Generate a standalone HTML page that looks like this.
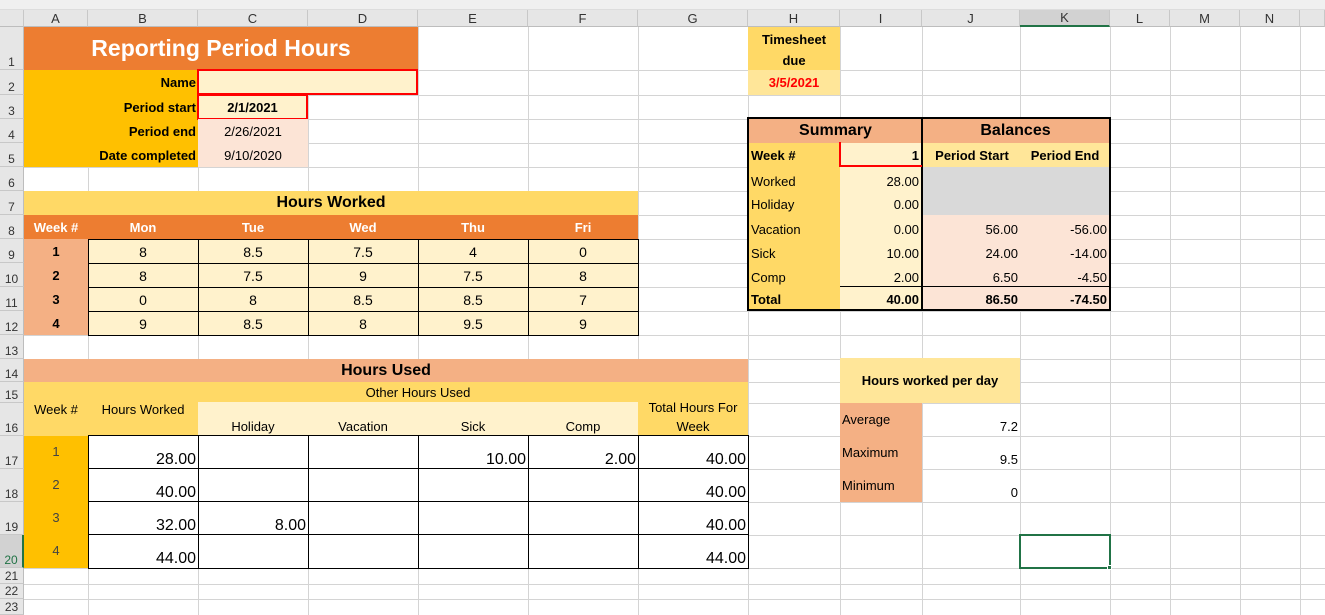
<!DOCTYPE html>
<html><head><meta charset="utf-8"><style>
body{margin:0;width:1325px;height:615px;overflow:hidden;background:#fff;font-family:"Liberation Sans",Arial,sans-serif;position:relative}
div{position:absolute;box-sizing:border-box}
.v{width:1px;top:10px;height:605px;background:#d4d4d4}
.h{height:1px;left:0;width:1325px;background:#d4d4d4}
.c{display:flex;align-items:center;font-size:13px;color:#000;white-space:nowrap;padding:0 2px}
.ch{top:10px;height:17px;background:#e6e6e6;font-size:13px;color:#333;display:flex;align-items:center;justify-content:center;border-right:1px solid #c8c8c8;border-bottom:1px solid #bdbdbd}
.rh{left:0;width:24px;background:#e6e6e6;font-size:12px;color:#333;display:flex;align-items:flex-end;justify-content:center;border-right:1px solid #bdbdbd;border-bottom:1px solid #c8c8c8}
.b{font-weight:bold}.r{justify-content:flex-end}.m{justify-content:center}
</style></head><body>
<div style="left:0;top:0;width:1325px;height:10px;background:#f0f0f0;border-bottom:1px solid #ddd"></div>
<!-- grid lines -->
<div class="v" style="left:88px"></div><div class="v" style="left:198px"></div><div class="v" style="left:308px"></div><div class="v" style="left:418px"></div><div class="v" style="left:528px"></div><div class="v" style="left:638px"></div><div class="v" style="left:748px"></div><div class="v" style="left:840px"></div><div class="v" style="left:922px"></div><div class="v" style="left:1020px"></div><div class="v" style="left:1110px"></div><div class="v" style="left:1170px"></div><div class="v" style="left:1240px"></div><div class="v" style="left:1300px"></div>
<div class="h" style="top:70px"></div><div class="h" style="top:95px"></div><div class="h" style="top:119px"></div><div class="h" style="top:143px"></div><div class="h" style="top:167px"></div><div class="h" style="top:191px"></div><div class="h" style="top:215px"></div><div class="h" style="top:239px"></div><div class="h" style="top:263px"></div><div class="h" style="top:287px"></div><div class="h" style="top:311px"></div><div class="h" style="top:335px"></div><div class="h" style="top:359px"></div><div class="h" style="top:382px"></div><div class="h" style="top:403px"></div><div class="h" style="top:436px"></div><div class="h" style="top:469px"></div><div class="h" style="top:502px"></div><div class="h" style="top:535px"></div><div class="h" style="top:568px"></div><div class="h" style="top:584px"></div><div class="h" style="top:599px"></div>
<!-- column headers -->
<div class="ch" style="left:0;width:24px"></div>
<div class="ch" style="left:24px;width:64px">A</div><div class="ch" style="left:88px;width:110px">B</div><div class="ch" style="left:198px;width:110px">C</div><div class="ch" style="left:308px;width:110px">D</div><div class="ch" style="left:418px;width:110px">E</div><div class="ch" style="left:528px;width:110px">F</div><div class="ch" style="left:638px;width:110px">G</div><div class="ch" style="left:748px;width:92px">H</div><div class="ch" style="left:840px;width:82px">I</div><div class="ch" style="left:922px;width:98px">J</div><div class="ch" style="left:1020px;width:90px;background:#d2d2d2;border-bottom:2px solid #217346">K</div><div class="ch" style="left:1110px;width:60px">L</div><div class="ch" style="left:1170px;width:70px">M</div><div class="ch" style="left:1240px;width:60px">N</div><div class="ch" style="left:1300px;width:25px"></div>
<!-- row headers -->
<div class="rh" style="top:27px;height:43px">1</div><div class="rh" style="top:70px;height:25px">2</div><div class="rh" style="top:95px;height:24px">3</div><div class="rh" style="top:119px;height:24px">4</div><div class="rh" style="top:143px;height:24px">5</div><div class="rh" style="top:167px;height:24px">6</div><div class="rh" style="top:191px;height:24px">7</div><div class="rh" style="top:215px;height:24px">8</div><div class="rh" style="top:239px;height:24px">9</div><div class="rh" style="top:263px;height:24px">10</div><div class="rh" style="top:287px;height:24px">11</div><div class="rh" style="top:311px;height:24px">12</div><div class="rh" style="top:335px;height:24px">13</div><div class="rh" style="top:359px;height:23px">14</div><div class="rh" style="top:382px;height:21px">15</div><div class="rh" style="top:403px;height:33px">16</div><div class="rh" style="top:436px;height:33px">17</div><div class="rh" style="top:469px;height:33px">18</div><div class="rh" style="top:502px;height:33px">19</div><div class="rh" style="top:535px;height:33px;background:#d2d2d2;color:#217346;border-right:2px solid #217346">20</div><div class="rh" style="top:568px;height:16px">21</div><div class="rh" style="top:584px;height:15px">22</div><div class="rh" style="top:599px;height:16px">23</div>

<!-- top block -->
<div class="c m b" style="left:24px;top:27px;width:394px;height:43px;background:#ed7d31;color:#fff;font-size:23px">Reporting Period Hours</div>
<div style="left:24px;top:70px;width:174px;height:97px;background:#ffc000"></div>
<div class="c r b" style="left:24px;top:70px;width:174px;height:25px">Name</div>
<div class="c r b" style="left:24px;top:95px;width:174px;height:24px">Period start</div>
<div class="c r b" style="left:24px;top:119px;width:174px;height:24px">Period end</div>
<div class="c r b" style="left:24px;top:143px;width:174px;height:24px">Date completed</div>
<div style="left:197px;top:69px;width:221px;height:26px;background:#fff2cc;border:2px solid #f00"></div>
<div class="c m b" style="left:197px;top:94px;width:111px;height:26px;background:#fff2cc;border:2px solid #f00">2/1/2021</div>
<div class="c m" style="left:198px;top:119px;width:110px;height:24px;background:#fce4d6">2/26/2021</div>
<div class="c m" style="left:198px;top:143px;width:110px;height:24px;background:#fce4d6">9/10/2020</div>

<!-- Hours worked -->
<div class="c m b" style="left:24px;top:191px;width:614px;height:24px;background:#ffd966;font-size:16px">Hours Worked</div>
<div style="left:24px;top:215px;width:614px;height:24px;background:#ed7d31"></div>
<div class="c m b" style="left:24px;top:215px;width:64px;height:24px;color:#fff">Week #</div>
<div class="c m b" style="left:88px;top:215px;width:110px;height:24px;color:#fff">Mon</div>
<div class="c m b" style="left:198px;top:215px;width:110px;height:24px;color:#fff">Tue</div>
<div class="c m b" style="left:308px;top:215px;width:110px;height:24px;color:#fff">Wed</div>
<div class="c m b" style="left:418px;top:215px;width:110px;height:24px;color:#fff">Thu</div>
<div class="c m b" style="left:528px;top:215px;width:110px;height:24px;color:#fff">Fri</div>
<div style="left:24px;top:239px;width:64px;height:96px;background:#f4b084"></div>
<div class="c m b" style="left:24px;top:239px;width:64px;height:24px">1</div><div class="c m b" style="left:24px;top:263px;width:64px;height:24px">2</div><div class="c m b" style="left:24px;top:287px;width:64px;height:24px">3</div><div class="c m b" style="left:24px;top:311px;width:64px;height:24px">4</div>
<div style="left:88px;top:239px;width:551px;height:97px;background:#fff2cc;border:1px solid #000"></div>
<div style="left:88px;top:263px;width:550px;height:1px;background:#000"></div><div style="left:88px;top:287px;width:550px;height:1px;background:#000"></div><div style="left:88px;top:311px;width:550px;height:1px;background:#000"></div>
<div style="left:198px;top:239px;width:1px;height:96px;background:#000"></div><div style="left:308px;top:239px;width:1px;height:96px;background:#000"></div><div style="left:418px;top:239px;width:1px;height:96px;background:#000"></div><div style="left:528px;top:239px;width:1px;height:96px;background:#000"></div>
<div class="c m" style="left:88px;top:240px;width:110px;height:24px;font-size:14px">8</div><div class="c m" style="left:198px;top:240px;width:110px;height:24px;font-size:14px">8.5</div><div class="c m" style="left:308px;top:240px;width:110px;height:24px;font-size:14px">7.5</div><div class="c m" style="left:418px;top:240px;width:110px;height:24px;font-size:14px">4</div><div class="c m" style="left:528px;top:240px;width:110px;height:24px;font-size:14px">0</div>
<div class="c m" style="left:88px;top:264px;width:110px;height:24px;font-size:14px">8</div><div class="c m" style="left:198px;top:264px;width:110px;height:24px;font-size:14px">7.5</div><div class="c m" style="left:308px;top:264px;width:110px;height:24px;font-size:14px">9</div><div class="c m" style="left:418px;top:264px;width:110px;height:24px;font-size:14px">7.5</div><div class="c m" style="left:528px;top:264px;width:110px;height:24px;font-size:14px">8</div>
<div class="c m" style="left:88px;top:288px;width:110px;height:24px;font-size:14px">0</div><div class="c m" style="left:198px;top:288px;width:110px;height:24px;font-size:14px">8</div><div class="c m" style="left:308px;top:288px;width:110px;height:24px;font-size:14px">8.5</div><div class="c m" style="left:418px;top:288px;width:110px;height:24px;font-size:14px">8.5</div><div class="c m" style="left:528px;top:288px;width:110px;height:24px;font-size:14px">7</div>
<div class="c m" style="left:88px;top:312px;width:110px;height:24px;font-size:14px">9</div><div class="c m" style="left:198px;top:312px;width:110px;height:24px;font-size:14px">8.5</div><div class="c m" style="left:308px;top:312px;width:110px;height:24px;font-size:14px">8</div><div class="c m" style="left:418px;top:312px;width:110px;height:24px;font-size:14px">9.5</div><div class="c m" style="left:528px;top:312px;width:110px;height:24px;font-size:14px">9</div>

<!-- Hours used -->
<div class="c m b" style="left:24px;top:359px;width:724px;height:23px;background:#f4b084;font-size:16px">Hours Used</div>
<div style="left:24px;top:382px;width:724px;height:54px;background:#ffd966"></div>
<div style="left:198px;top:402px;width:440px;height:34px;background:#fff2cc"></div>
<div class="c m" style="left:198px;top:382px;width:440px;height:21px">Other Hours Used</div>
<div class="c m" style="left:24px;top:398px;width:64px;height:22px">Week #</div>
<div class="c m" style="left:88px;top:398px;width:110px;height:22px">Hours Worked</div>
<div class="c m" style="left:198px;top:416px;width:110px;height:20px">Holiday</div>
<div class="c m" style="left:308px;top:416px;width:110px;height:20px">Vacation</div>
<div class="c m" style="left:418px;top:416px;width:110px;height:20px">Sick</div>
<div class="c m" style="left:528px;top:416px;width:110px;height:20px">Comp</div>
<div class="c m" style="left:638px;top:397px;width:110px;height:20px">Total Hours For</div>
<div class="c m" style="left:638px;top:416px;width:110px;height:20px">Week</div>
<div style="left:24px;top:436px;width:64px;height:132px;background:#ffc000"></div>
<div class="c m" style="left:24px;top:443px;width:64px;height:16px;color:#444">1</div><div class="c m" style="left:24px;top:476px;width:64px;height:16px;color:#444">2</div><div class="c m" style="left:24px;top:509px;width:64px;height:16px;color:#444">3</div><div class="c m" style="left:24px;top:542px;width:64px;height:16px;color:#444">4</div>
<div style="left:88px;top:435px;width:661px;height:134px;border:1px solid #000;background:#fff"></div>
<div style="left:88px;top:468px;width:660px;height:1px;background:#000"></div><div style="left:88px;top:501px;width:660px;height:1px;background:#000"></div><div style="left:88px;top:534px;width:660px;height:1px;background:#000"></div>
<div style="left:198px;top:436px;width:1px;height:132px;background:#000"></div><div style="left:308px;top:436px;width:1px;height:132px;background:#000"></div><div style="left:418px;top:436px;width:1px;height:132px;background:#000"></div><div style="left:528px;top:436px;width:1px;height:132px;background:#000"></div><div style="left:638px;top:436px;width:1px;height:132px;background:#000"></div>
<div class="c r" style="left:88px;top:450px;width:110px;height:20px;font-size:16px">28.00</div><div class="c r" style="left:418px;top:450px;width:110px;height:20px;font-size:16px">10.00</div><div class="c r" style="left:528px;top:450px;width:110px;height:20px;font-size:16px">2.00</div><div class="c r" style="left:638px;top:450px;width:110px;height:20px;font-size:16px">40.00</div>
<div class="c r" style="left:88px;top:483px;width:110px;height:20px;font-size:16px">40.00</div><div class="c r" style="left:638px;top:483px;width:110px;height:20px;font-size:16px">40.00</div>
<div class="c r" style="left:88px;top:516px;width:110px;height:20px;font-size:16px">32.00</div><div class="c r" style="left:198px;top:516px;width:110px;height:20px;font-size:16px">8.00</div><div class="c r" style="left:638px;top:516px;width:110px;height:20px;font-size:16px">40.00</div>
<div class="c r" style="left:88px;top:549px;width:110px;height:20px;font-size:16px">44.00</div><div class="c r" style="left:638px;top:549px;width:110px;height:20px;font-size:16px">44.00</div>

<!-- Timesheet due -->
<div style="left:748px;top:27px;width:92px;height:43px;background:#ffd966"></div>
<div class="c m b" style="left:748px;top:29px;width:92px;height:20px">Timesheet</div>
<div class="c m b" style="left:748px;top:50px;width:92px;height:20px">due</div>
<div class="c m b" style="left:748px;top:70px;width:92px;height:25px;background:#ffe699;color:#f00">3/5/2021</div>

<!-- Summary -->
<div style="left:747px;top:117px;width:364px;height:194px;border:2px solid #000;background:#fff"></div>
<div class="c m b" style="left:749px;top:119px;width:173px;height:24px;background:#f4b084;font-size:16px">Summary</div>
<div class="c m b" style="left:922px;top:119px;width:187px;height:24px;background:#f4b084;font-size:16px">Balances</div>
<div style="left:921px;top:119px;width:2px;height:190px;background:#000"></div>
<div style="left:749px;top:143px;width:91px;height:166px;background:#ffd966"></div>
<div style="left:840px;top:143px;width:81px;height:166px;background:#fff2cc"></div>
<div style="left:923px;top:143px;width:186px;height:24px;background:#ffe699"></div>
<div style="left:923px;top:167px;width:186px;height:48px;background:#d9d9d9"></div>
<div style="left:923px;top:215px;width:186px;height:94px;background:#fce4d6"></div>
<div style="left:839px;top:142px;width:83px;height:25px;border:2px solid #f00;border-top:0;border-right:0"></div>
<div style="left:839px;top:165px;width:83px;height:2px;background:#f00"></div>
<div style="left:840px;top:286px;width:269px;height:1px;background:#000"></div>
<div class="c b" style="left:749px;top:143px;width:91px;height:24px">Week #</div>
<div class="c r b" style="left:840px;top:143px;width:81px;height:24px">1</div>
<div class="c m b" style="left:923px;top:143px;width:98px;height:24px">Period Start</div>
<div class="c m b" style="left:1021px;top:143px;width:88px;height:24px">Period End</div>
<div class="c" style="left:749px;top:169px;width:91px;height:24px">Worked</div><div class="c r" style="left:840px;top:169px;width:81px;height:24px">28.00</div>
<div class="c" style="left:749px;top:192px;width:91px;height:24px">Holiday</div><div class="c r" style="left:840px;top:192px;width:81px;height:24px">0.00</div>
<div class="c" style="left:749px;top:217px;width:91px;height:24px">Vacation</div><div class="c r" style="left:840px;top:217px;width:81px;height:24px">0.00</div><div class="c r" style="left:923px;top:217px;width:97px;height:24px">56.00</div><div class="c r" style="left:1020px;top:217px;width:89px;height:24px">-56.00</div>
<div class="c" style="left:749px;top:241px;width:91px;height:24px">Sick</div><div class="c r" style="left:840px;top:241px;width:81px;height:24px">10.00</div><div class="c r" style="left:923px;top:241px;width:97px;height:24px">24.00</div><div class="c r" style="left:1020px;top:241px;width:89px;height:24px">-14.00</div>
<div class="c" style="left:749px;top:265px;width:91px;height:24px">Comp</div><div class="c r" style="left:840px;top:265px;width:81px;height:24px">2.00</div><div class="c r" style="left:923px;top:265px;width:97px;height:24px">6.50</div><div class="c r" style="left:1020px;top:265px;width:89px;height:24px">-4.50</div>
<div class="c b" style="left:749px;top:288px;width:91px;height:22px">Total</div><div class="c r b" style="left:840px;top:288px;width:81px;height:22px">40.00</div><div class="c r b" style="left:923px;top:288px;width:97px;height:22px">86.50</div><div class="c r b" style="left:1020px;top:288px;width:89px;height:22px">-74.50</div>

<!-- Hours worked per day -->
<div class="c m b" style="left:840px;top:358px;width:180px;height:45px;background:#ffe699">Hours worked per day</div>
<div style="left:840px;top:403px;width:82px;height:99px;background:#f4b084"></div>
<div class="c" style="left:840px;top:410px;width:82px;height:18px">Average</div>
<div class="c" style="left:840px;top:443px;width:82px;height:18px">Maximum</div>
<div class="c" style="left:840px;top:476px;width:82px;height:18px">Minimum</div>
<div class="c r" style="left:922px;top:417px;width:98px;height:18px">7.2</div>
<div class="c r" style="left:922px;top:450px;width:98px;height:18px">9.5</div>
<div class="c r" style="left:922px;top:483px;width:98px;height:18px">0</div>
<div style="left:1019px;top:534px;width:92px;height:35px;border:2px solid #217346"></div>
<div style="left:1107px;top:565px;width:5px;height:5px;background:#217346;border:1px solid #fff"></div>
</body></html>
